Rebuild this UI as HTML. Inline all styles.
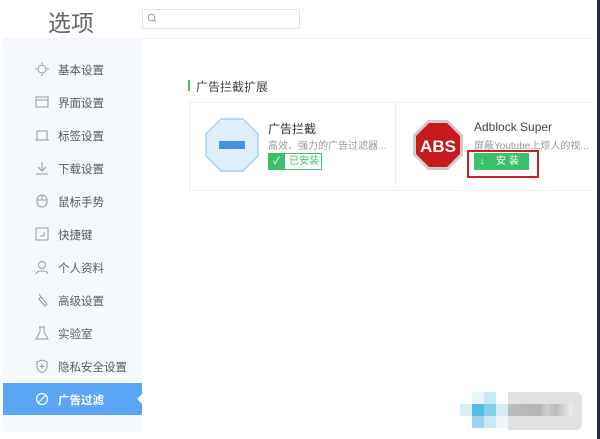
<!DOCTYPE html>
<html><head><meta charset="utf-8"><style>
body{margin:0;width:600px;height:439px;background:#fff;position:relative;overflow:hidden;font-family:"Liberation Sans","Noto Sans CJK SC",sans-serif;}
.a{position:absolute}
.nav{position:absolute;left:58px;font-size:11.5px;color:#5a5a5a}
.ic{position:absolute;left:35px;width:14px;height:14px}
.ic *{stroke:#999}
.b{position:absolute;width:12px;height:12px}
</style></head><body>
<div class="a" style="left:597px;top:0;width:3px;height:439px;background:#1d2b3a"></div>
<div class="a" style="left:48px;top:4px;font-size:23px;color:#666">选项</div>
<div class="a" style="left:142px;top:9px;width:156px;height:18px;border:1px solid #e3e3e3;background:#fff"></div>
<svg class="a" style="left:147px;top:13px" width="10" height="10"><circle cx="4.5" cy="4.5" r="3.3" fill="none" stroke="#999" stroke-width="1"/><line x1="7" y1="7" x2="9" y2="9" stroke="#999"/></svg>
<div class="a" style="left:3px;top:38px;width:590px;height:1px;background:#f0f2f5"></div>
<div class="a" style="left:3px;top:39px;width:139px;height:393px;background:#f5f8fc"></div>
<div class="a" style="left:3px;top:383px;width:139px;height:32px;background:#5aa5f5"></div>
<div class="a" style="left:137px;top:393px;width:0;height:0;border-top:6px solid transparent;border-bottom:6px solid transparent;border-right:6px solid #fff"></div>
<svg class="ic" style="top:62px" viewBox="0 0 14 14"><circle cx="7" cy="7" r="4" fill="none"/><g><line x1="7" y1="0" x2="7" y2="2"/><line x1="7" y1="12" x2="7" y2="14"/><line x1="0" y1="7" x2="2" y2="7"/><line x1="12" y1="7" x2="14" y2="7"/></g></svg>
<div class="nav" style="top:62px">基本设置</div>
<svg class="ic" style="top:95px" viewBox="0 0 14 14"><rect x="1" y="2" width="12" height="10" fill="none"/><line x1="1" y1="5" x2="13" y2="5"/></svg>
<div class="nav" style="top:95px">界面设置</div>
<svg class="ic" style="top:128px" viewBox="0 0 14 14"><path d="M2 12V3h10v9M0 12h14" fill="none"/></svg>
<div class="nav" style="top:128px">标签设置</div>
<svg class="ic" style="top:161px" viewBox="0 0 14 14"><path d="M7 1v9M3 6l4 4 4-4M1 13h12" fill="none"/></svg>
<div class="nav" style="top:161px">下载设置</div>
<svg class="ic" style="top:194px" viewBox="0 0 14 14"><rect x="2" y="1" width="10" height="12" rx="5" fill="none"/><line x1="2" y1="6" x2="12" y2="6"/><line x1="7" y1="1" x2="7" y2="6"/></svg>
<div class="nav" style="top:194px">鼠标手势</div>
<svg class="ic" style="top:227px" viewBox="0 0 14 14"><rect x="1" y="1" width="12" height="12" fill="none"/><path d="M9 5v4H5" fill="none"/></svg>
<div class="nav" style="top:227px">快捷键</div>
<svg class="ic" style="top:260px" viewBox="0 0 14 14"><circle cx="7" cy="5" r="3.5" fill="none"/><path d="M1 14c1-4 11-4 12 0" fill="none"/></svg>
<div class="nav" style="top:260px">个人资料</div>
<svg class="ic" style="top:293px" viewBox="0 0 14 14"><path d="M4 1l2 3-2 2 6 7 2-2-6-7" fill="none"/></svg>
<div class="nav" style="top:293px">高级设置</div>
<svg class="ic" style="top:326px" viewBox="0 0 14 14"><path d="M4 1h6M5 1v5L1 13h12L9 6V1" fill="none"/></svg>
<div class="nav" style="top:326px">实验室</div>
<svg class="ic" style="top:359px" viewBox="0 0 14 14"><path d="M7 1l5 2v5c0 3-3 5-5 5.5C5 13 2 11 2 8V3z" fill="none"/><path d="M7 5v5M4.5 7.5h5"/></svg>
<div class="nav" style="top:359px">隐私安全设置</div>
<svg class="a" style="left:35px;top:392px" width="14" height="14" viewBox="0 0 14 14"><circle cx="7" cy="7" r="5.5" fill="none" stroke="#fff" stroke-width="1.2"/><line x1="3" y1="11" x2="11" y2="3" stroke="#fff" stroke-width="1.2"/></svg>
<div class="nav" style="top:392px;color:#fff;font-weight:bold">广告过滤</div>

<div class="a" style="left:188px;top:80px;width:2px;height:11px;background:#3cbf6a"></div>
<div class="a" style="left:196px;top:78px;font-size:12px;color:#444">广告拦截扩展</div>
<div class="a" style="left:189px;top:102px;width:400px;height:87px;border:1px solid #eceef0;border-right:none"></div>
<div class="a" style="left:395px;top:103px;width:1px;height:87px;background:#eceef0"></div>
<svg class="a" style="left:204px;top:117px" width="56" height="56" viewBox="0 0 56 56"><polygon points="17,2 39,2 54,17 54,39 39,54 17,54 2,39 2,17" fill="#dfeefb" stroke="#a9cdf0" stroke-width="1.5"/><rect x="15" y="24" width="26" height="8" rx="1" fill="#4a90e2"/></svg>
<div class="a" style="left:268px;top:120px;font-size:12px;color:#333">广告拦截</div>
<div class="a" style="left:268px;top:137px;font-size:10px;color:#999">高效、强力的广告过滤器...</div>
<div class="a" style="left:268px;top:153px;width:54px;height:17px;border:1px solid #3cbf6a;box-sizing:border-box;background:#fff"></div>
<div class="a" style="left:268px;top:153px;width:17px;height:17px;background:#3cbf6a;color:#fff;font-size:10px;text-align:center;line-height:17px">✓</div>
<div class="a" style="left:289px;top:153px;font-size:10px;line-height:17px;color:#3cbf6a">已安装</div>
<svg class="a" style="left:412px;top:119px" width="52" height="52" viewBox="0 0 52 52"><polygon points="16,1 36,1 51,16 51,36 36,51 16,51 1,36 1,16" fill="#ccc"/><polygon points="17,4 35,4 48,17 48,35 35,48 17,48 4,35 4,17" fill="#c8191d"/><text x="26" y="33" text-anchor="middle" fill="#fff" font-size="17" font-weight="bold" font-family="Liberation Sans">ABS</text></svg>
<div class="a" style="left:474px;top:120px;font-size:12px;color:#444">Adblock Super</div>
<div class="a" style="left:474px;top:137px;font-size:10px;color:#999">屏蔽Youtube上烦人的视...</div>
<div class="a" style="left:467px;top:150px;width:72px;height:28px;border:2px solid #c8202a;box-sizing:border-box"></div>
<div class="a" style="left:474px;top:153px;width:55px;height:17px;background:#3cbf6a"></div>
<div class="a" style="left:474px;top:153px;width:16px;height:17px;color:#fff;font-size:10px;text-align:center;line-height:17px">↓</div>
<div class="a" style="left:496px;top:153px;font-size:10px;line-height:17px;color:#fff;letter-spacing:3px">安装</div>

<div class="b" style="left:460px;top:404px;background:#d6eef8"></div>
<div class="b" style="left:472px;top:392px;background:#e8f6fb"></div>
<div class="b" style="left:472px;top:404px;background:#55bde6"></div>
<div class="b" style="left:472px;top:416px;background:#9cd6ee"></div>
<div class="b" style="left:484px;top:392px;background:#c6e9f6"></div>
<div class="b" style="left:484px;top:404px;background:#86cde9"></div>
<div class="b" style="left:484px;top:416px;background:#c8e8f4"></div>
<div class="b" style="left:496px;top:404px;background:#d2ecf6"></div>
<div class="b" style="left:496px;top:416px;background:#eef7fa"></div>
<div class="a" style="left:508px;top:392px;width:74px;height:38px;background:#e2e2e2;border-radius:0 6px 6px 0"></div>
<div class="a" style="left:508px;top:404px;width:64px;height:12px;background:linear-gradient(90deg,#bcbcbc 0,#b4b4b4 50%,#d0d0d0 60%,#bbb 75%,#eee 100%)"></div>
</body></html>
